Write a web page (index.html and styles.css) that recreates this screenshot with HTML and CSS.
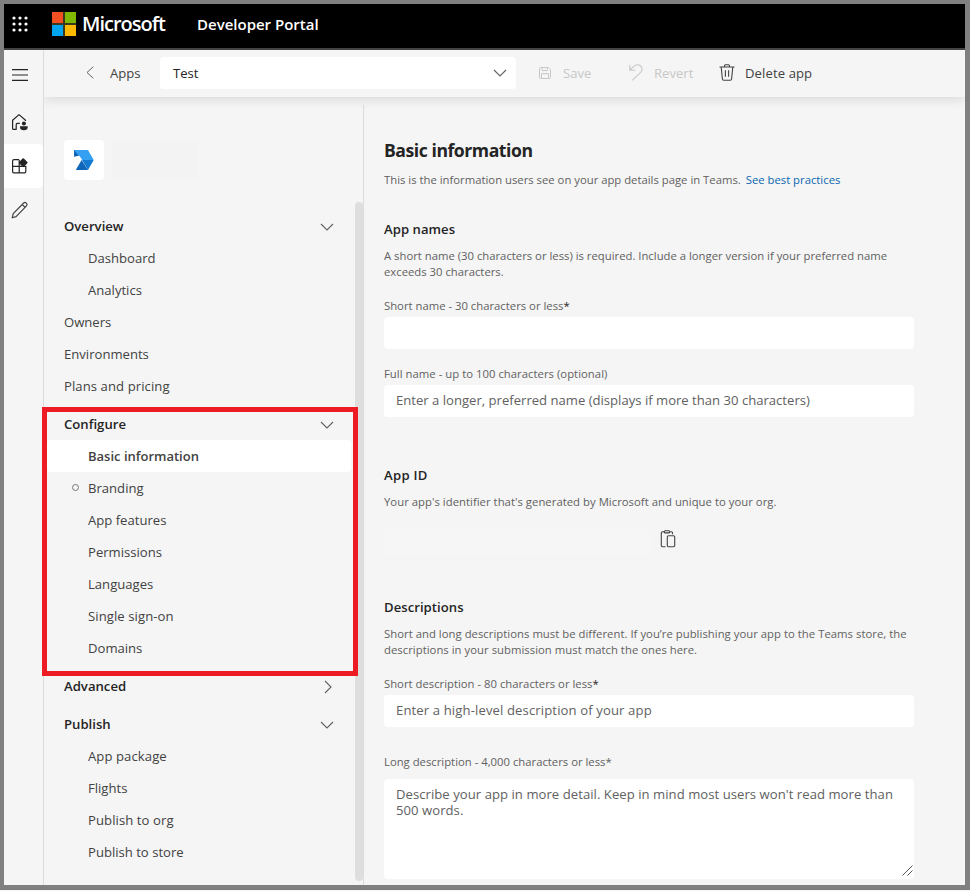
FILE: index.html
```html
<!DOCTYPE html>
<html lang="en">
<head>
<meta charset="utf-8">
<title>Developer Portal</title>
<link rel="stylesheet" href="styles.css">
</head>
<body>
<div class="frame">
  <header class="topbar">
    <svg class="waffle" width="16" height="16" viewBox="0 0 16 16" fill="#fff"><circle cx="2" cy="2" r="1.6"/><circle cx="8" cy="2" r="1.6"/><circle cx="14" cy="2" r="1.6"/><circle cx="2" cy="8" r="1.6"/><circle cx="8" cy="8" r="1.6"/><circle cx="14" cy="8" r="1.6"/><circle cx="2" cy="14" r="1.6"/><circle cx="8" cy="14" r="1.6"/><circle cx="14" cy="14" r="1.6"/></svg>
    <svg class="mslogo" width="24" height="24" viewBox="0 0 24 24"><path fill="#3b3a20" d="M0 0h24v24H0z"/><path fill="#f25022" d="M0 0h11v11H0z"/><path fill="#7fba00" d="M13 0h11v11H13z"/><path fill="#00a4ef" d="M0 13h11v11H0z"/><path fill="#ffb900" d="M13 13h11v11H13z"/></svg>
    <span class="brand">Microsoft</span>
    <span class="product">Developer Portal</span>
  </header>
  <div class="body">
    <nav class="rail">
      <div class="rail-item menu"><svg width="16" height="14" viewBox="0 0 16 14" stroke="#242424" stroke-width="1.2"><path d="M0 1.6h16M0 7h16M0 12.4h16"/></svg></div>
      <div class="rail-item"><svg width="18" height="18" viewBox="0 0 18 18" fill="none" stroke="#242424" stroke-width="1.2" stroke-linejoin="round"><path d="M14.5 8V7.2L8 1.6 1.6 7.2v8.2q0 .9.9.9h2.7v-4.6q0-1.3 1.2-1.3h2.4"/><circle cx="12.9" cy="10.5" r="2" fill="#242424" stroke="none"/><path d="M9 13.2h7.7v.8q0 3.2-3.8 3.2T9 14z" fill="#242424" stroke="none"/></svg></div>
      <div class="rail-item active"><svg width="18" height="18" viewBox="0 0 18 18" fill="none" stroke="#242424" stroke-width="1.2"><path d="M8 2.7H3Q1.6 2.7 1.6 4v10.5q0 1.3 1.3 1.3h10.6q1.3 0 1.3-1.3V9.3H1.6M8.2 2.7v13"/><path d="m12.2 2.2 3.5 3.5-3.5 3.5-3.5-3.5z" fill="#242424" stroke-width="1.8" stroke-linejoin="round"/></svg></div>
      <div class="rail-item"><svg width="18" height="18" viewBox="0 0 18 18" fill="none" stroke="#424242" stroke-width="1.2" stroke-linejoin="round"><path d="m1.2 16.8 1-4.2L12.7 2q1.3-1.1 2.6.1 1.4 1.4.2 2.8L5.1 15.6zM11.2 3.5l3.1 3.1"/></svg></div>
    </nav>
    <div class="work">
      <div class="toolbar">
        <svg class="back" width="8" height="13" viewBox="0 0 8 13" fill="none" stroke="#616161"><path d="M7.3.7 1 6.5l6.3 5.8"/></svg>
        <span class="apps">Apps</span>
        <div class="select"><span>Test</span><svg width="14" height="8" viewBox="0 0 14 8" fill="none" stroke="#616161" stroke-width="1.1"><path d="m1 1 6 6 6-6"/></svg></div>
        <svg class="i-save" width="12" height="12" viewBox="0 0 12 12" fill="none" stroke="#c7c7c7"><path d="M1.5.5h7.8l2.2 2.2v7.8q0 1-1 1h-9q-1 0-1-1v-9q0-1 1-1zM3 .5v3.1h5.3V.5M2.5 11.5V6.7h7v4.8"/></svg>
        <span class="off save">Save</span>
        <svg class="i-rev" width="14" height="17" viewBox="0 0 14 17" fill="none" stroke="#c7c7c7" stroke-width="1.1"><path d="M.8.8v5.4h5.4M.9 6 4.8 2.4Q8.5-.7 11.7 2q2.8 3.2 0 6.3L3.2 16.3"/></svg>
        <span class="off revert">Revert</span>
        <svg class="i-del" width="16" height="17" viewBox="0 0 16 17" fill="none" stroke="#424242" stroke-width="1.1"><path d="M.5 3h15M5.5 3V1.8Q5.5.8 6.5.8h3q1 0 1 1V3M2.2 3l1.2 12q.1 1.3 1.3 1.3h6.6q1.2 0 1.3-1.3L13.8 3M6.4 6.3v6.5M9.6 6.3v6.5"/></svg>
        <span class="delete">Delete app</span>
      </div>
      <div class="columns">
        <aside class="side">
          <div class="appcard">
            <div class="appicon"><svg width="20" height="20" viewBox="0 0 20 20"><path fill="#35a0f2" d="M0 0h14l5.7 9.9H8.2L5.4 5.8 0 5.8z"/><path fill="#1065b5" d="m0 0 4.8 5.8L0 6.7z"/><path fill="#1479d0" d="M8 9.9h11.7L14 20z"/><path fill="#1066b8" d="M7.6 9.9 14 20H1.8z"/></svg></div>
            <div class="appname"></div>
          </div>
          <div class="tree">
            <div class="group">
              <div class="row head"><span>Overview</span><svg width="14" height="8" viewBox="0 0 14 8"><path d="m1 1 6 6 6-6"/></svg></div>
              <div class="row sub">Dashboard</div><div class="row sub">Analytics</div>
              <div class="row">Owners</div><div class="row">Environments</div><div class="row wide">Plans and pricing</div>
            </div>
            <div class="group marked">
              <div class="row head"><span>Configure</span><svg width="14" height="8" viewBox="0 0 14 8"><path d="m1 1 6 6 6-6"/></svg></div>
              <div class="row sub selected">Basic information</div>
              <div class="row sub dotted">Branding</div><div class="row sub">App features</div><div class="row sub">Permissions</div><div class="row sub">Languages</div><div class="row sub wide">Single sign-on</div><div class="row sub">Domains</div>
            </div>
            <div class="group">
              <div class="row head"><span>Advanced</span><svg class="right" width="8" height="14" viewBox="0 0 8 14"><path d="m1 1 6 6-6 6"/></svg></div>
            </div>
            <div class="group">
              <div class="row head"><span>Publish</span><svg width="14" height="8" viewBox="0 0 14 8"><path d="m1 1 6 6 6-6"/></svg></div>
              <div class="row sub wide">App package</div><div class="row sub">Flights</div><div class="row sub wide">Publish to org</div><div class="row sub">Publish to store</div>
            </div>
          </div>
          <div class="scroll"></div>
        </aside>
        <main class="main">
          <h1>Basic information</h1>
          <p>This is the information users see on your app details page in Teams. <a>See best practices</a></p>
          <h2 class="names">App names</h2>
          <p>A short name (30 characters or less) is required. Include a longer version if your preferred name<br>exceeds 30 characters.</p>
          <label class="l1">Short name - 30 characters or less<b>*</b></label>
          <div class="field"></div>
          <label class="l2 loose">Full name - up to 100 characters (optional)</label>
          <div class="field">Enter a longer, preferred name (displays if more than 30 characters)</div>
          <h2 class="appid">App ID</h2>
          <p class="loose">Your app's identifier that's generated by Microsoft and unique to your org.</p>
          <div class="idrow"><div class="idval"></div><svg width="16" height="18" viewBox="0 0 16 18" fill="none" stroke="#424242" stroke-width="1.1"><path d="M4 1.8H2.5q-1.2 0-1.2 1.2v12.5q0 1.2 1.2 1.2h3M10.2 1.8h1.2q1.1 0 1.1 1.2v1.2"/><rect x="4.2" y=".8" width="5.6" height="2.1" rx="1"/><rect x="7.3" y="5.8" width="7.4" height="10.9" rx="1.2"/></svg></div>
          <h2 class="desc">Descriptions</h2>
          <p class="loose">Short and long descriptions must be different. If you’re publishing your app to the Teams store, the<br>descriptions in your submission must match the ones here.</p>
          <label class="l1">Short description - 80 characters or less<b>*</b></label>
          <div class="field spaced">Enter a high-level description of your app</div>
          <label class="l3">Long description - 4,000 characters or less*</label>
          <div class="area">Describe your app in more detail. Keep in mind most users won't read more than<br>500 words.<svg class="grip" width="11" height="11" viewBox="0 0 11 11" stroke="#555" stroke-width="1"><path d="M.5 10.5l10-10M5.5 10.5l5-5"/></svg></div>
        </main>
      </div>
    </div>
  </div>
</div>
</body>
</html>
```
FILE: styles.css
```css
* { box-sizing: border-box; }
body { margin: 0; background: #f5f5f5; font: 13.1px/20px "Open Sans", "Noto Sans", sans-serif; color: #424242; overflow: hidden; }
svg { display: block; flex: none; }
.frame { width: 970px; height: 890px; border: solid #808080; border-width: 4px 5px 5px 4px; display: flex; flex-direction: column; background: #f5f5f5; }
.topbar { height: 46px; flex: none; background: #000; border-bottom: 2px solid #444; display: flex; align-items: center; color: #fff; white-space: nowrap; }
.waffle { margin: -5px 0 0 8px; }
.mslogo { margin: -4px 0 0 24px; }
.brand { margin: -5px 0 0 6px; width: 115px; font-size: 20px; font-weight: 600; letter-spacing: -1px; }
.product { margin-top: -4px; font-size: 15px; font-weight: 600; }
.body { flex: 1; display: flex; min-height: 0; }
.rail { width: 40px; border-right: 1px solid #dcdcdc; padding-top: 3px; }
.rail-item { height: 44px; padding-left: 7px; display: flex; align-items: center; }
.rail-item.menu { padding-left: 8px; margin-bottom: 3px; }
.rail-item.active { background: #fff; border-radius: 0 4px 4px 0; }
.work { flex: 1; min-width: 0; display: flex; flex-direction: column; }
.toolbar { height: 47px; flex: none; display: flex; align-items: center; white-space: nowrap; box-shadow: 0 1px 12px rgba(0,0,0,.15); clip-path: inset(0 0 -12px 0); position: relative; z-index: 1; background: #f5f5f5; padding-bottom: 2px; }
.back { margin-left: 42px; }
.apps { margin-left: 16px; width: 50px; }
.select { width: 356px; height: 32px; background: #fff; border-radius: 4px; padding: 0 9px 0 13px; display: flex; align-items: center; justify-content: space-between; color: #242424; }
.i-save { margin-left: 23px; }
.save { margin-left: 12px; width: 66px; }
.revert { margin-left: 11px; width: 65px; }
.delete { margin-left: 10px; letter-spacing: .1px; }
.off { color: #c7c7c7; }
.columns { flex: 1; display: flex; min-height: 0; }
.side { width: 320px; border-right: 1px solid #dcdcdc; border-image: linear-gradient(transparent 9px, #dcdcdc 9px) 1; position: relative; padding-top: 43px; }
.appcard { display: flex; gap: 8px; align-items: center; height: 40px; margin-left: 20px; }
.appicon { width: 40px; height: 40px; background: #fff; border-radius: 4px; padding: 10px; }
.appname { width: 86px; height: 38px; background: #f3f3f3; }
.tree { margin-top: 30px; }
.group { margin-bottom: 6px; }
.row { height: 32px; padding-left: 20px; display: flex; align-items: center; white-space: nowrap; }
.sub { padding-left: 44px; }
.wide { letter-spacing: .08px; }
.head { font-weight: 600; color: #242424; justify-content: space-between; padding-right: 29px; font-size: 13.15px; }
.head svg { fill: none; stroke: #616161; stroke-width: 1.1; margin-top: 1px; }
.head svg.right { margin-right: 2px; }
.marked { position: relative; }
.marked::after { content: ""; box-sizing: border-box; position: absolute; z-index: 2; left: -2px; top: -1px; width: 316px; height: 269px; border: 5px solid #ed1c24; }
.selected { background: #fff; border-radius: 4px; margin: 0 12px 0 3px; padding-left: 41px; font-weight: 600; font-size: 13px; }
.dotted::before { content: ""; box-sizing: border-box; width: 7px; height: 7px; border: 1px solid #757575; border-radius: 50%; margin: -2px 9px 0 -16px; }
.scroll { position: absolute; right: 0; top: 105px; width: 8px; height: 679px; border-radius: 4px; background: #dedede; }
.main { width: 550px; padding: 42px 0 0 20px; }
h1, h2, p { margin: 0; white-space: nowrap; }
h1 { font-size: 17.6px; line-height: 23px; margin-bottom: 10px; font-weight: 700; color: #242424; letter-spacing: -.45px; }
h2 { font-size: 13.1px; line-height: 20px; font-weight: 600; color: #242424; letter-spacing: .05px; }
p, label { font-size: 11.3px; line-height: 16px; color: #616161; display: block; }
p { margin-top: 9px; }
p a { color: #0b67b2; margin-left: 2px; }
.names { margin-top: 31px; }
.l1 { margin-top: 18px; }
.l2 { margin-top: 17px; }
.l3 { margin-top: 27px; }
.loose { letter-spacing: .03px; }
label b { font-weight: 400; color: #242424; }
.field { height: 32px; margin-top: 3px; background: #fff; border-radius: 4px; padding: 0 12px; line-height: 31px; color: #616161; white-space: nowrap; }
.spaced { letter-spacing: .12px; }
.appid { margin-top: 48px; letter-spacing: .3px; }
.idrow { display: flex; height: 27px; margin-top: 20px; gap: 10px; }
.idval { width: 266px; background: #f6f6f6; }
.desc { margin-top: 40px; }
.area { position: relative; height: 100px; margin-top: 9px; background: #fff; border-radius: 4px; padding: 7px 12px; line-height: 16px; color: #616161; white-space: nowrap; letter-spacing: .045px; }
.grip { position: absolute; right: 1px; bottom: 3px; }
```
